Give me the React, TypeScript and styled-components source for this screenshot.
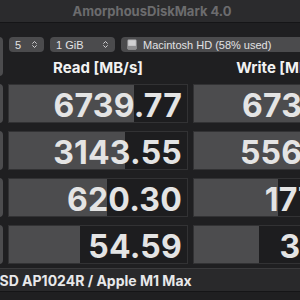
import React from 'react';
import styled, { createGlobalStyle } from 'styled-components';
import { ChevronsUpDown } from 'lucide-react';

const GlobalStyle = createGlobalStyle`
  html, body {
    margin: 0;
    padding: 0;
    background: #1f1f21;
    overflow: hidden;
  }
  body {
    font-family: Inter, "Noto Sans", "Liberation Sans", sans-serif;
    color: #e6e6e6;
  }
`;

type Result = { read: string; readFill: number; write: string; writeFill: number };

const results: Result[] = [
  { read: '6739.77', readFill: 70, write: '6734.18', writeFill: 72 },
  { read: '3143.55', readFill: 65, write: '5561.87', writeFill: 68 },
  { read: '620.30', readFill: 55, write: '177.42', writeFill: 47.5 },
  { read: '54.59', readFill: 40, write: '33.91', writeFill: 37 },
];

const App = () => {
  return (
    <>
      <GlobalStyle />
      <Window>
        <TitleBar>AmorphousDiskMark 4.0</TitleBar>
        <Content>
          <Board>
            <AllButton />
            <TopPanel>
              <Controls>
                <Select $width={35}>
                  <span>5</span>
                  <ChevronsUpDown size={9} strokeWidth={2.5} />
                </Select>
                <Select $width={65}>
                  <span>1 GiB</span>
                  <ChevronsUpDown size={9} strokeWidth={2.5} />
                </Select>
                <Select $width={250}>
                  <DiskLabel>
                    <DriveIcon />
                    <span>Macintosh HD (58% used)</span>
                  </DiskLabel>
                  <ChevronsUpDown size={9} strokeWidth={2.5} />
                </Select>
              </Controls>
              <Heading>Read [MB/s]</Heading>
              <Heading>Write [MB/s]</Heading>
            </TopPanel>

            {results.map((r, i) => (
              <React.Fragment key={i}>
                <TestButton />
                <Cell $fill={r.readFill}>{r.read}</Cell>
                <Cell $fill={r.writeFill}>{r.write}</Cell>
              </React.Fragment>
            ))}
          </Board>
        </Content>
        <Footer>APPLE SSD AP1024R / Apple M1 Max</Footer>
      </Window>
    </>
  );
};

const DriveIcon = () => (
  <svg width="10" height="11" viewBox="0 0 10 11">
    <rect x="0.5" y="0.5" width="9" height="10" rx="1.2" fill="#b9b9bb" />
    <rect x="0.5" y="7" width="9" height="3.5" rx="1" fill="#8e8e90" />
    <rect x="1.5" y="1.5" width="7" height="5" fill="#cfcfd1" />
  </svg>
);

const Window = styled.div`
  width: 444px;
  margin-left: -70px;
`;

const TitleBar = styled.div`
  height: 22px;
  background: #2b2b2d;
  border-bottom: 1px solid #151517;
  display: flex;
  align-items: center;
  justify-content: center;
  font-size: 13px;
  font-weight: 700;
  color: #6c6c6e;
`;

const Content = styled.div`
  padding-top: 14px;
`;

const Board = styled.div`
  display: grid;
  grid-template-columns: 73px 180px 179px;
  column-gap: 5px;
  row-gap: 8px;
  grid-auto-rows: 39px;
`;

const AllButton = styled.div`
  background: #4c4c4e;
  border-radius: 4px;
`;

const TestButton = styled(AllButton)``;

const TopPanel = styled.div`
  grid-column: 2 / 4;
  display: grid;
  grid-template-columns: 180px 179px;
  grid-template-rows: 16px 1fr;
  column-gap: 5px;
`;

const Controls = styled.div`
  grid-column: 1 / 3;
  display: flex;
  gap: 6px;
  padding-left: 1px;
`;

const Select = styled.div<{ $width: number }>`
  width: ${(p) => p.$width}px;
  height: 15px;
  box-sizing: border-box;
  padding: 0 5px 0 6px;
  background: #4b4b4d;
  border-radius: 4px;
  display: flex;
  align-items: center;
  justify-content: space-between;
  font-family: "Liberation Sans", Arial, sans-serif;
  font-size: 11px;
  color: #e2e2e4;
  white-space: nowrap;
  flex-shrink: 0;

  svg {
    color: #d8d8da;
  }
`;

const DiskLabel = styled.div`
  display: flex;
  align-items: center;
  gap: 6px;
`;

const Heading = styled.div`
  align-self: end;
  text-align: center;
  font-size: 15px;
  font-weight: 700;
  line-height: 18px;
  color: #f2f2f2;
  margin-bottom: -1px;
`;

const Cell = styled.div<{ $fill: number }>`
  box-sizing: border-box;
  border: 1px solid #323234;
  background: linear-gradient(
    to right,
    #4c4c4e ${(p) => p.$fill}%,
    #1d1d1f ${(p) => p.$fill}%
  );
  display: flex;
  align-items: center;
  justify-content: flex-end;
  padding: 3px 5px 0 0;
  font-size: 32px;
  font-weight: 700;
  color: #e4e4e4;
  letter-spacing: 0.2px;
`;

const Footer = styled.div`
  margin-top: 4px;
  height: 24px;
  box-sizing: border-box;
  border-top: 1px solid #3a3a3c;
  border-bottom: 1px solid #151517;
  background: #29292b;
  display: flex;
  align-items: center;
  padding-left: 12px;
  font-size: 14px;
  font-weight: 700;
  color: #e8e8ea;
  white-space: nowrap;
`;

export default App;
